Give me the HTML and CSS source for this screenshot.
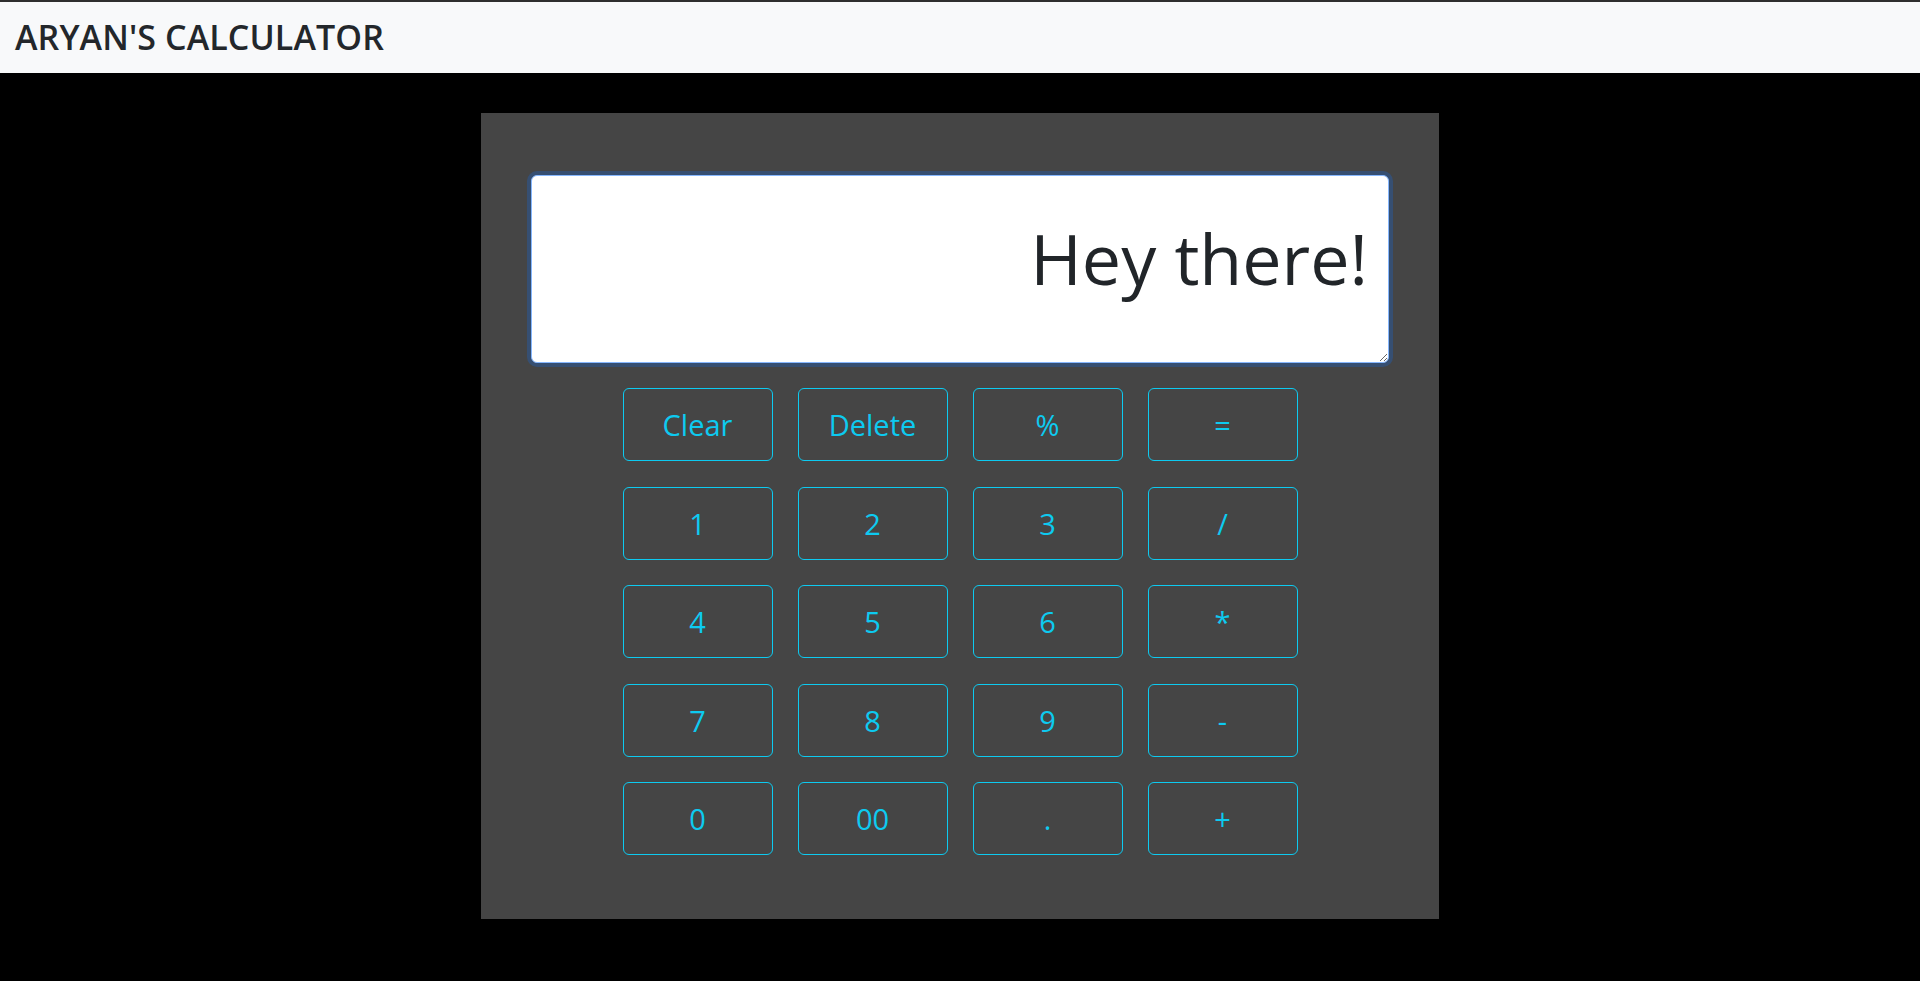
FILE: index.html
```html
<!DOCTYPE html>
<html lang="en">
<head>
<meta charset="utf-8">
<title>Aryan's Calculator</title>
<link rel="stylesheet" href="styles.css">
</head>
<body>
<nav class="navbar">
  <span class="brand">ARYAN'S CALCULATOR</span>
</nav>
<main class="main">
  <section class="calc">
    <textarea class="display" spellcheck="false">Hey there!</textarea>
    <div class="keys">
      <button class="key">Clear</button>
      <button class="key">Delete</button>
      <button class="key">%</button>
      <button class="key">=</button>
      <button class="key">1</button>
      <button class="key">2</button>
      <button class="key">3</button>
      <button class="key">/</button>
      <button class="key">4</button>
      <button class="key">5</button>
      <button class="key">6</button>
      <button class="key">*</button>
      <button class="key">7</button>
      <button class="key">8</button>
      <button class="key">9</button>
      <button class="key">-</button>
      <button class="key">0</button>
      <button class="key">00</button>
      <button class="key">.</button>
      <button class="key">+</button>
    </div>
  </section>
</main>
</body>
</html>
```
FILE: styles.css
```css
html, body {
  margin: 0;
  padding: 0;
  background: #000;
  font-family: "Open Sans", "Noto Sans", sans-serif;
}

.navbar {
  border-top: 2px solid #2e2e2e;
  background: #f8f9fa;
  height: 71px;
  display: flex;
  align-items: center;
  padding: 0 15px;
}

.brand {
  font-size: 34px;
  font-weight: 600;
  color: #23272b;
  line-height: 1;
  margin-top: -1px;
  letter-spacing: 0.1px;
}

.main {
  padding-top: 40px;
}

.calc {
  width: 958px;
  box-sizing: border-box;
  margin: 0 auto;
  background: #454545;
  padding: 62px 50px 64px 50px;
}

.display {
  display: block;
  width: 100%;
  height: 188px;
  box-sizing: border-box;
  border: 1px solid #86b7fe;
  border-radius: 6px;
  box-shadow: 0 0 0 4px rgba(13, 110, 253, 0.25);
  outline: none;
  background: #fff;
  color: #212529;
  font-family: "Open Sans", "Noto Sans", sans-serif;
  font-size: 70px;
  line-height: 100px;
  text-align: right;
  padding: 32px 20px 0 12px;
  resize: both;
}

.keys {
  margin-top: 25px;
  display: grid;
  grid-template-columns: repeat(4, 150px);
  grid-auto-rows: 73px;
  column-gap: 25px;
  row-gap: 25.5px;
  justify-content: center;
}

.key {
  background: transparent;
  border: 1px solid #0dcaf0;
  border-radius: 6px;
  color: #0dcaf0;
  font-family: "Open Sans", "Noto Sans", sans-serif;
  font-size: 29px;
  padding: 0;
  cursor: pointer;
}
```
